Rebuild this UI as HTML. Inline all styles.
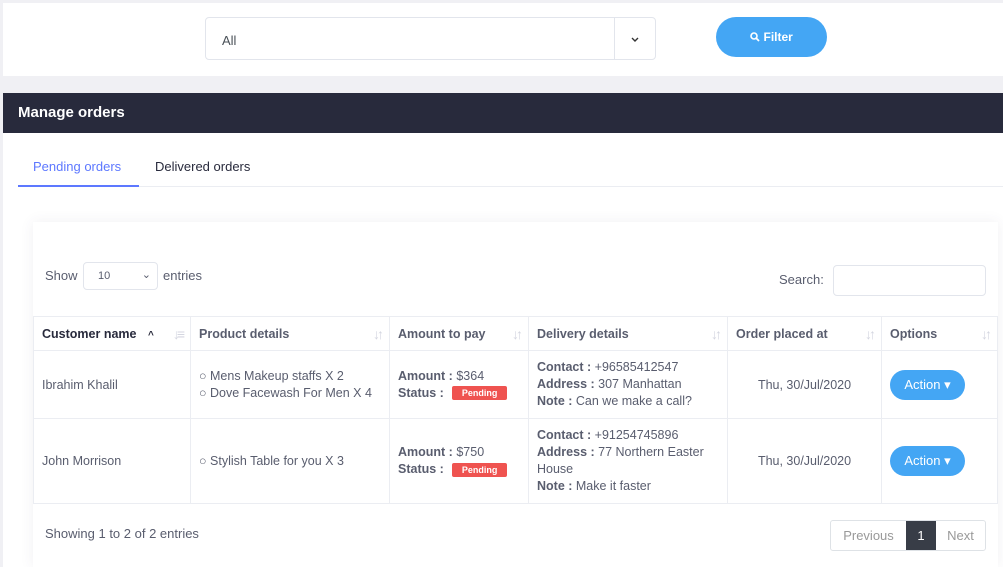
<!DOCTYPE html>
<html><head><meta charset="utf-8"><style>
*{box-sizing:border-box;margin:0;padding:0}
html,body{width:1003px;height:567px;overflow:hidden}
body{background:#f0f0f4;font-family:"Liberation Sans",sans-serif;color:#595d6e;font-size:13px;position:relative}
.top{position:absolute;left:3px;top:3px;width:1000px;height:73px;background:#fff}
.sel{position:absolute;left:205px;top:17px;width:451px;height:43px;border:1px solid #e2e5ec;border-radius:4px;background:#fff}
.sel span{position:absolute;left:16px;top:15px;font-size:13px;color:#495057}
.sel .arr{position:absolute;right:0;top:0;width:41px;height:41px;border-left:1px solid #e2e5ec}
.btnf{position:absolute;left:716px;top:17px;width:111px;height:40px;border-radius:20px;background:#44a6f4;color:#fff;font-size:12px;font-weight:bold;text-align:center;line-height:40px}
.port{position:absolute;left:3px;top:93px;width:1000px;height:474px;background:#fff}
.head{height:40px;background:#282a3c;color:#fff;font-size:15px;font-weight:bold;line-height:40px;padding-left:15px}
.tabs{position:absolute;top:57px;left:15px;right:0;height:37px;border-bottom:1px solid #ebedf2}
.tab{position:absolute;top:9px;font-size:13px}
.card{position:absolute;left:30px;top:129px;width:965px;height:345px;background:#fff;box-shadow:0 0 13px rgba(82,63,105,.08)}
table{position:absolute;left:0;top:94px;border-collapse:collapse;width:965px}
td,th{border:1px solid #ebedf2;text-align:left;vertical-align:middle;padding:0 8px;font-size:12.5px;position:relative}
th{height:34px;font-weight:bold;color:#595d6e}
th i{position:absolute;right:8px;top:9px;color:#d4d6e0;font-style:normal;font-size:14px;letter-spacing:-3px}
td b{color:#595d6e}
.pend{display:inline-block;background:#ef5350;color:#fff;font-size:9px;font-weight:bold;padding:1px 10px;line-height:12px;border-radius:2px;margin-left:8px;vertical-align:middle}
.act{display:inline-block;background:#44a6f4;color:#fff;border-radius:15px;width:75px;height:30px;line-height:30px;text-align:center;font-size:13px}
</style></head><body>
<div class="top"></div>
<div class="sel"><span>All</span><div class="arr"><svg width="41" height="41"><path d="M17 20l3 3 3-3" stroke="#333" stroke-width="1.4" fill="none"/></svg></div></div>
<div class="btnf"><svg width="10" height="10" style="vertical-align:-1px"><circle cx="4" cy="4" r="3" stroke="#fff" stroke-width="1.6" fill="none"/><path d="M6 6l3 3" stroke="#fff" stroke-width="1.8"/></svg> Filter</div>
<div class="port">
<div class="head">Manage orders</div>
<div class="tabs">
<div class="tab" style="left:15px;color:#5d78ff">Pending orders</div>
<div style="position:absolute;left:0;bottom:-1px;width:121px;height:2px;background:#5d78ff"></div>
<div class="tab" style="left:137px;color:#282a3c">Delivered orders</div>
</div>
<div class="card">
<div style="position:absolute;left:12px;top:46px">Show</div>
<div style="position:absolute;left:50px;top:40px;width:75px;height:28px;border:1px solid #e2e5ec;border-radius:4px;font-size:11px;padding:7px 14px">10<span style="position:absolute;right:6px;top:5px">&#8964;</span></div>
<div style="position:absolute;left:130px;top:46px">entries</div>
<div style="position:absolute;left:746px;top:50px">Search:</div>
<div style="position:absolute;left:800px;top:43px;width:153px;height:31px;border:1px solid #e2e5ec;border-radius:4px"></div>
<table>
<tr><th style="width:157px;color:#282a3c">Customer name <span style="margin-left:8px;font-size:10px">^</span><i>↓≡</i></th><th style="width:199px">Product details<i>↓↑</i></th><th style="width:139px">Amount to pay<i>↓↑</i></th><th style="width:199px">Delivery details<i>↓↑</i></th><th style="width:154px">Order placed at<i>↓↑</i></th><th>Options<i>↓↑</i></th></tr>
<tr style="height:68px"><td>Ibrahim Khalil</td><td style="line-height:17px">○ Mens Makeup staffs X 2<br>○ Dove Facewash For Men X 4</td><td style="line-height:17px"><b>Amount :</b> $364<br><b>Status :</b><span class="pend">Pending</span></td><td style="line-height:17px"><b>Contact :</b> +96585412547<br><b>Address :</b> 307 Manhattan<br><b>Note :</b> Can we make a call?</td><td style="text-align:center">Thu, 30/Jul/2020</td><td><span class="act">Action ▾</span></td></tr>
<tr style="height:85px"><td>John Morrison</td><td>○ Stylish Table for you X 3</td><td style="line-height:17px"><b>Amount :</b> $750<br><b>Status :</b><span class="pend">Pending</span></td><td style="line-height:17px"><b>Contact :</b> +91254745896<br><b>Address :</b> 77 Northern Easter House<br><b>Note :</b> Make it faster</td><td style="text-align:center">Thu, 30/Jul/2020</td><td><span class="act">Action ▾</span></td></tr>
</table>
<div style="position:absolute;left:12px;top:304px">Showing 1 to 2 of 2 entries</div>
<div style="position:absolute;left:797px;top:298px;width:156px;height:31px;border:1px solid #dee2e6;border-radius:3px;display:flex;font-size:13px;line-height:29px;color:#999">
<div style="width:75px;text-align:center">Previous</div><div style="width:30px;background:#383d47;color:#fff;text-align:center">1</div><div style="flex:1;text-align:center">Next</div></div>
</div>
</div>
</body></html>
